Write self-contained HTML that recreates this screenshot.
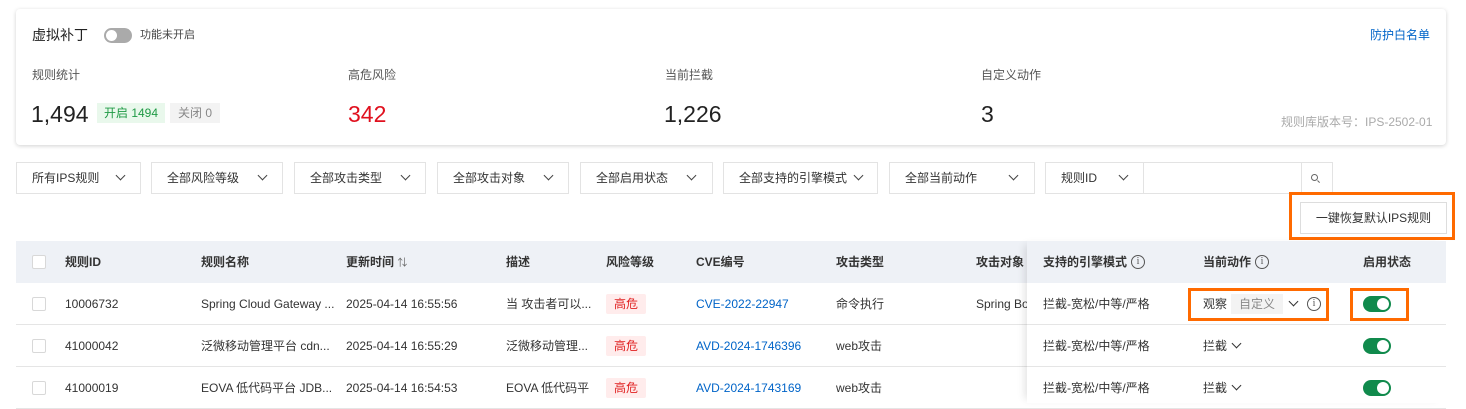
<!DOCTYPE html>
<html><head><meta charset="utf-8"><style>
*{box-sizing:border-box;margin:0;padding:0}
body{width:1466px;height:403px;overflow:hidden;background:#fff;font-family:"Liberation Sans","Noto Sans CJK SC",sans-serif;font-size:12px;color:#333;position:relative}
.a{position:absolute;white-space:nowrap;line-height:16px}
.card{position:absolute;left:16px;top:9px;width:1430px;height:136px;background:#fff;border-radius:4px;box-shadow:0 1px 4px rgba(0,0,0,.18)}
.sel{position:absolute;top:162px;height:32px;border:1px solid #e3e3e3;background:#fff;padding-left:15px;line-height:30px;color:#333}
.chev{position:absolute;top:9px;width:7px;height:7px;border-right:1.2px solid #444;border-bottom:1.2px solid #444;transform:rotate(45deg)}
.hdr{position:absolute;left:16px;top:241px;width:1430px;height:42px;background:#eef1f6}
.row{position:absolute;left:16px;width:1430px;height:42px;border-bottom:1px solid #e5e5e5}
.cb{position:absolute;left:32px;width:14px;height:14px;border:1px solid #d8d8d8;background:#fff;border-radius:2px}
.th{font-weight:bold;color:#333}
.tag{position:absolute;background:#ffecec;color:#e02020;height:20px;line-height:20px;padding:0 8px;border-radius:2px}
.lnk{color:#0064c8}
.tog{position:absolute;left:1363px;width:28px;height:16px;border-radius:8px;background:#108a4c}
.tog:after{content:"";position:absolute;right:2px;top:2px;width:12px;height:12px;border-radius:50%;background:#fff}
.info{display:inline-block;width:14px;height:14px;border:1px solid #555;border-radius:50%;font-size:10px;line-height:12px;text-align:center;vertical-align:-2px;font-weight:normal;color:#555;font-family:"Liberation Serif",serif}
.infoA{position:absolute;width:14px;height:14px;border:1px solid #555;border-radius:50%;font-size:10px;line-height:12px;text-align:center;color:#555;font-family:"Liberation Serif",serif}
.sm{width:7px;height:7px;top:-3px;position:relative;display:inline-block;border-right:1.3px solid #333;border-bottom:1.3px solid #333;transform:rotate(45deg);margin-left:6px}
.big{font-size:23px;line-height:28px;color:#222;font-weight:500}
.fixed{position:absolute;left:1027px;top:241px;width:419px;height:162px;background:#fff;box-shadow:-6px 0 8px -4px rgba(0,0,0,.12)}
</style></head><body>
<div class="card"></div>
<div class="a" style="left:32px;top:27px;font-size:14px;color:#222">虚拟补丁</div>
<div class="a" style="left:104px;top:28px;width:28px;height:15px;border-radius:8px;background:#aaa"><div style="position:absolute;left:2px;top:2px;width:11px;height:11px;border-radius:50%;background:#fff"></div></div>
<div class="a" style="left:140px;top:27px;font-size:11px;color:#444">功能未开启</div>
<div class="a lnk" style="left:1370px;top:27px">防护白名单</div>
<div class="a" style="left:32px;top:67px;color:#555">规则统计</div>
<div class="a" style="left:348px;top:67px;color:#555">高危风险</div>
<div class="a" style="left:665px;top:67px;color:#555">当前拦截</div>
<div class="a" style="left:981px;top:67px;color:#555">自定义动作</div>
<div class="a big" style="left:31px;top:100px">1,494</div>
<div class="a" style="left:97px;top:103px;height:20px;line-height:20px;padding:0 7px;background:#e9f8ec;color:#1f9a45">开启 1494</div>
<div class="a" style="left:170px;top:103px;height:20px;line-height:20px;padding:0 8px;background:#f3f3f3;color:#888">关闭 0</div>
<div class="a big" style="left:348px;top:100px;color:#e0101e">342</div>
<div class="a big" style="left:664px;top:100px">1,226</div>
<div class="a big" style="left:981px;top:100px">3</div>
<div class="a" style="left:1281px;top:114px;color:#aaa">规则库版本号：IPS-2502-01</div>

<div class="sel" style="left:16px;width:125px">所有IPS规则<span class="chev" style="left:100px"></span></div>
<div class="sel" style="left:151px;width:132px">全部风险等级<span class="chev" style="left:107px"></span></div>
<div class="sel" style="left:294px;width:132px">全部攻击类型<span class="chev" style="left:107px"></span></div>
<div class="sel" style="left:437px;width:132px">全部攻击对象<span class="chev" style="left:107px"></span></div>
<div class="sel" style="left:580px;width:133px">全部启用状态<span class="chev" style="left:107px"></span></div>
<div class="sel" style="left:723px;width:155px">全部支持的引擎模式<span class="chev" style="left:131px"></span></div>
<div class="sel" style="left:889px;width:146px">全部当前动作<span class="chev" style="left:120px"></span></div>
<div class="sel" style="left:1045px;width:288px">规则ID<span class="chev" style="left:74px"></span>
<span style="position:absolute;left:97px;top:0;width:1px;height:30px;background:#e3e3e3"></span>
<span style="position:absolute;left:255px;top:0;width:1px;height:30px;background:#e3e3e3"></span>
<span style="position:absolute;left:265px;top:11px;width:7px;height:7px;border:1.2px solid #666;border-radius:50%"></span>
<span style="position:absolute;left:271px;top:18px;width:3px;height:1.2px;background:#666;transform:rotate(45deg)"></span></div>

<div class="a" style="left:1289px;top:192px;width:166px;height:48px;border:3px solid #ff6a00"></div>
<div class="a" style="left:1300px;top:202px;width:147px;height:32px;border:1px solid #ddd;background:#fff;text-align:center;line-height:30px;color:#333">一键恢复默认IPS规则</div>

<div class="hdr"></div>
<div class="cb" style="top:255px"></div>
<div class="a th" style="left:65px;top:254px">规则ID</div>
<div class="a th" style="left:201px;top:254px">规则名称</div>
<div class="a th" style="left:346px;top:254px">更新时间 <span style="font-weight:normal;font-size:10px;color:#666">⇅</span></div>
<div class="a th" style="left:506px;top:254px">描述</div>
<div class="a th" style="left:606px;top:254px">风险等级</div>
<div class="a th" style="left:696px;top:254px">CVE编号</div>
<div class="a th" style="left:836px;top:254px">攻击类型</div>
<div class="a th" style="left:976px;top:254px">攻击对象</div>

<div class="row" style="top:283px"></div>
<div class="row" style="top:325px"></div>
<div class="row" style="top:367px"></div>
<div class="cb" style="top:297px"></div><div class="cb" style="top:339px"></div><div class="cb" style="top:381px"></div>
<div class="a" style="left:65px;top:296px">10006732</div>
<div class="a" style="left:65px;top:338px">41000042</div>
<div class="a" style="left:65px;top:380px">41000019</div>
<div class="a" style="left:201px;top:296px">Spring Cloud Gateway ...</div>
<div class="a" style="left:201px;top:338px">泛微移动管理平台 cdn...</div>
<div class="a" style="left:201px;top:380px">EOVA 低代码平台 JDB...</div>
<div class="a" style="left:346px;top:296px">2025-04-14 16:55:56</div>
<div class="a" style="left:346px;top:338px">2025-04-14 16:55:29</div>
<div class="a" style="left:346px;top:380px">2025-04-14 16:54:53</div>
<div class="a" style="left:506px;top:296px">当 攻击者可以...</div>
<div class="a" style="left:506px;top:338px">泛微移动管理...</div>
<div class="a" style="left:506px;top:380px;width:83px;overflow:hidden">EOVA 低代码平...</div>
<div class="tag" style="left:606px;top:294px">高危</div>
<div class="tag" style="left:606px;top:336px">高危</div>
<div class="tag" style="left:606px;top:378px">高危</div>
<div class="a lnk" style="left:696px;top:296px">CVE-2022-22947</div>
<div class="a lnk" style="left:696px;top:338px">AVD-2024-1746396</div>
<div class="a lnk" style="left:696px;top:380px">AVD-2024-1743169</div>
<div class="a" style="left:836px;top:296px">命令执行</div>
<div class="a" style="left:836px;top:338px">web攻击</div>
<div class="a" style="left:836px;top:380px">web攻击</div>
<div class="a" style="left:976px;top:296px">Spring Boot</div>

<div class="fixed">
<div style="position:absolute;left:0;top:0;width:419px;height:42px;background:#eef1f6"></div>
<div style="position:absolute;left:0;top:42px;width:419px;height:42px;border-bottom:1px solid #e5e5e5"></div>
<div style="position:absolute;left:0;top:84px;width:419px;height:42px;border-bottom:1px solid #e5e5e5"></div>
</div>
<div class="a th" style="left:1043px;top:254px">支持的引擎模式</div>
<div class="infoA" style="left:1131px;top:255px">i</div>
<div class="a th" style="left:1203px;top:254px">当前动作</div>
<div class="infoA" style="left:1255px;top:255px">i</div>
<div class="a th" style="left:1363px;top:254px">启用状态</div>
<div class="a" style="left:1043px;top:296px">拦截-宽松/中等/严格</div>
<div class="a" style="left:1043px;top:338px">拦截-宽松/中等/严格</div>
<div class="a" style="left:1043px;top:380px">拦截-宽松/中等/严格</div>
<div class="a" style="left:1203px;top:296px">观察</div>
<div class="a" style="left:1231px;top:294px;height:20px;line-height:20px;padding:0 8px;background:#f3f3f3;color:#888">自定义</div>
<div class="a" style="left:1284px;top:296px"><span class="sm"></span></div>
<div class="infoA" style="left:1307px;top:297px">i</div>
<div class="a" style="left:1203px;top:338px">拦截<span class="sm"></span></div>
<div class="a" style="left:1203px;top:380px">拦截<span class="sm"></span></div>
<div class="tog" style="top:296px"></div>
<div class="tog" style="top:338px"></div>
<div class="tog" style="top:380px"></div>
<div class="a" style="left:1188px;top:288px;width:141px;height:33px;border:3px solid #ff6a00"></div>
<div class="a" style="left:1350px;top:288px;width:59px;height:33px;border:3px solid #ff6a00"></div>
</body></html>
